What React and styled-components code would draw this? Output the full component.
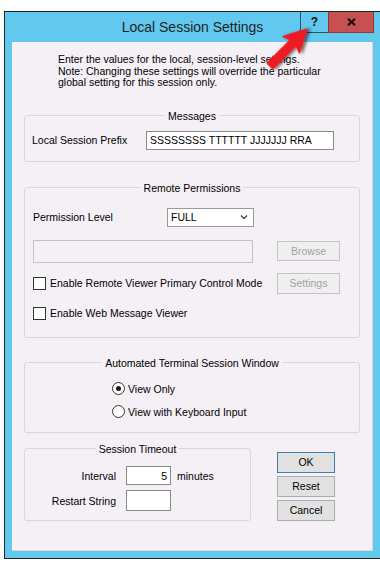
import React from 'react'
import styled, { createGlobalStyle } from 'styled-components'

const GlobalStyle = createGlobalStyle`
  html, body {
    margin: 0;
    padding: 0;
    background: #fff;
    overflow: hidden;
  }
  body {
    font-family: "Liberation Sans", Arial, sans-serif;
    color: #000;
  }
`

const Page = styled.div`
  position: relative;
  width: 380px;
  height: 568px;
  padding: 11px 0 0 4px;
  box-sizing: border-box;
  overflow: hidden;
`

const Window = styled.div`
  width: 378px;
  background: #62c8ee;
  border: 1px solid #232323;
  display: flex;
  flex-direction: column;
`

const TitleBar = styled.div`
  display: flex;
  align-items: flex-start;
  height: 30px;
`

const Title = styled.div`
  flex: 1;
  padding-left: 80px;
  text-align: center;
  font-size: 14px;
  line-height: 30px;
  color: #1f1f1f;
`

const CaptionButtons = styled.div`
  display: flex;
  margin: -1px 9px 0 0;
`

const CaptionButton = styled.div`
  width: ${(p) => p.$w}px;
  height: 22px;
  box-sizing: border-box;
  display: flex;
  align-items: center;
  justify-content: center;
  background: ${(p) => (p.$close ? '#c75050' : '#62c8ee')};
  border: 1px solid ${(p) => (p.$close ? '#8c3a3a' : '#2d4f5e')};
  border-top-color: #232323;
  border-right-width: ${(p) => (p.$close ? 1 : 0)}px;
  font-weight: bold;
  font-size: 12px;
  color: #111;
`

const Client = styled.div`
  margin: 0 10px 7px 7px;
  height: 509px;
  box-sizing: border-box;
  background: #f5f0f5;
  padding: 12px 12px 0 12px;
  border-right: 1px solid #d9d9dc;
  border-bottom: 1px solid #d9d9dc;
  font-size: 10.5px;
`

const Intro = styled.p`
  margin: 0 0 0 34px;
  line-height: 11.5px;
`

const Group = styled.fieldset`
  margin: ${(p) => p.$mt}px 0 0;
  padding: ${(p) => p.$pad};
  border: 1px solid #d6d9dd;
  border-radius: 3px;
  min-width: 0;
  width: ${(p) => (p.$w ? `${p.$w}px` : 'auto')};
  box-sizing: border-box;
`

const Legend = styled.legend`
  margin: 0 auto;
  padding: 0 3px;
  font-size: 10.5px;
  line-height: 12px;
`

const GroupBody = styled.div`
  display: flex;
  flex-direction: column;
  gap: ${(p) => p.$gap || 0}px;
  padding: ${(p) => p.$pad || 0};
`

const Row = styled.div`
  display: flex;
  align-items: center;
  justify-content: ${(p) => p.$justify || 'flex-start'};
  margin-top: ${(p) => p.$mt || 0}px;
  height: ${(p) => p.$h}px;
`

const Label = styled.span`
  width: ${(p) => p.$w}px;
  flex: none;
  text-align: ${(p) => p.$align || 'left'};
  margin-right: ${(p) => p.$gap || 0}px;
`

const Unit = styled.span`
  margin-left: 6px;
`

const TextBox = styled.div`
  width: ${(p) => p.$w}px;
  height: ${(p) => p.$h}px;
  box-sizing: border-box;
  border: 1px solid ${(p) => (p.$disabled ? '#c2c2c2' : '#8a8a8a')};
  background: ${(p) => (p.$disabled ? '#f5f0f5' : '#fff')};
  display: flex;
  align-items: center;
  justify-content: ${(p) => (p.$right ? 'flex-end' : 'flex-start')};
  padding: 0 3px;
  font-size: 10.5px;
  white-space: nowrap;
  overflow: hidden;
`

const Select = styled.div`
  width: 87px;
  height: 19px;
  box-sizing: border-box;
  border: 1px solid #9a9a9a;
  background: #fff;
  display: flex;
  align-items: center;
  justify-content: space-between;
  padding: 0 5px 0 3px;
`

const Button = styled.div`
  width: ${(p) => p.$w}px;
  height: ${(p) => p.$h || 21}px;
  box-sizing: border-box;
  display: flex;
  align-items: center;
  justify-content: center;
  background: ${(p) => (p.$disabled ? '#efefef' : '#e1e1e1')};
  border: 1px solid
    ${(p) => (p.$default ? '#3c7fb1' : p.$disabled ? '#c4c4c4' : '#adadad')};
  color: ${(p) => (p.$disabled ? '#a3a3a3' : '#000')};
  font-size: 10.5px;
`

const Check = styled.span`
  width: 13px;
  height: 13px;
  box-sizing: border-box;
  border: 1px solid #333;
  background: #fff;
  margin-right: 4px;
  flex: none;
`

const Radio = styled.span`
  width: 13px;
  height: 13px;
  box-sizing: border-box;
  border: 1px solid #333;
  border-radius: 50%;
  background: #fff;
  margin-right: 3px;
  flex: none;
  display: flex;
  align-items: center;
  justify-content: center;
  &::after {
    content: '';
    width: 5px;
    height: 5px;
    border-radius: 50%;
    background: ${(p) => (p.$on ? '#1a1a1a' : 'transparent')};
  }
`

const ButtonColumn = styled.div`
  display: flex;
  flex-direction: column;
  gap: 3px;
  margin: 9px 0 0 26px;
`

const BottomRow = styled.div`
  display: flex;
  align-items: flex-start;
  margin-top: 10px;
`

const Arrow = styled.svg`
  position: absolute;
  left: 256px;
  top: 18px;
  width: 64px;
  height: 64px;
  overflow: visible;
`

const Chevron = () => (
  <svg width="8" height="6" viewBox="0 0 8 6">
    <path d="M1 1.5 L4 4.5 L7 1.5" fill="none" stroke="#444" strokeWidth="1.3" />
  </svg>
)

export default function App() {
  return (
    <Page>
      <GlobalStyle />
      <Window>
        <TitleBar>
          <Title>Local Session Settings</Title>
          <CaptionButtons>
            <CaptionButton $w={28}>?</CaptionButton>
            <CaptionButton $w={46} $close>
              <svg width="9" height="8" viewBox="0 0 9 8">
                <path d="M1 0.8 L8 7.2 M8 0.8 L1 7.2" stroke="#111" strokeWidth="2.2" />
              </svg>
            </CaptionButton>
          </CaptionButtons>
        </TitleBar>

        <Client>
          <Intro>
            Enter the values for the local, session-level settings.
            <br />
            Note: Changing these settings will override the particular
            <br />
            global setting for this session only.
          </Intro>

          <Group $mt={21} $pad="9px 0 11px">
            <Legend>Messages</Legend>
            <GroupBody $pad="0 24px 0 7px">
              <Row $h={19}>
                <Label $w={114}>Local Session Prefix</Label>
                <TextBox $w={188} $h={19}>SSSSSSSS TTTTTT JJJJJJJ RRA</TextBox>
              </Row>
            </GroupBody>
          </Group>

          <Group $mt={20} $pad="14px 0 17px">
            <Legend>Remote Permissions</Legend>
            <GroupBody $pad="0 19px 0 8px">
              <Row $h={19}>
                <Label $w={134}>Permission Level</Label>
                <Select>
                  <span>FULL</span>
                  <Chevron />
                </Select>
              </Row>
              <Row $h={23} $mt={13} $justify="space-between">
                <TextBox $w={220} $h={23} $disabled />
                <Button $w={63} $h={20} $disabled>Browse</Button>
              </Row>
              <Row $h={21} $mt={10} $justify="space-between">
                <Row $h={13}>
                  <Check />
                  <span>Enable Remote Viewer Primary Control Mode</span>
                </Row>
                <Button $w={63} $disabled>Settings</Button>
              </Row>
              <Row $h={13} $mt={13}>
                <Check />
                <span>Enable Web Message Viewer</span>
              </Row>
            </GroupBody>
          </Group>

          <Group $mt={19} $pad="12px 0">
            <Legend>Automated Terminal Session Window</Legend>
            <GroupBody $gap={7} $pad="0 0 0 87px">
              <Row $h={16}>
                <Radio $on />
                <span>View Only</span>
              </Row>
              <Row $h={16}>
                <Radio />
                <span>View with Keyboard Input</span>
              </Row>
            </GroupBody>
          </Group>

          <BottomRow>
            <Group $mt={0} $w={227} $pad="11px 0 9px">
              <Legend>Session Timeout</Legend>
              <GroupBody $gap={5} $pad="0 0 0 7px">
                <Row $h={20}>
                  <Label $w={84} $align="right" $gap={10}>Interval</Label>
                  <TextBox $w={45} $h={19} $right>5</TextBox>
                  <Unit>minutes</Unit>
                </Row>
                <Row $h={20}>
                  <Label $w={84} $align="right" $gap={10}>Restart String</Label>
                  <TextBox $w={45} $h={21} />
                </Row>
              </GroupBody>
            </Group>
            <ButtonColumn>
              <Button $w={58} $default>OK</Button>
              <Button $w={58}>Reset</Button>
              <Button $w={58}>Cancel</Button>
            </ButtonColumn>
          </BottomRow>
        </Client>
      </Window>

      <Arrow viewBox="0 0 64 64">
        <defs>
          <filter id="arrowShadow" x="-30%" y="-30%" width="160%" height="160%">
            <feDropShadow dx="2" dy="2" stdDeviation="1.4" floodColor="#000" floodOpacity="0.55" />
          </filter>
        </defs>
        <g transform="translate(14 48) rotate(-45)" filter="url(#arrowShadow)">
          <polygon
            points="0,-4 33,-4 30,-11.5 52,0 30,11.5 33,4 0,4"
            fill="#ec1c24"
            stroke="#ec1c24"
            strokeWidth="1.5"
            strokeLinejoin="round"
          />
        </g>
      </Arrow>
    </Page>
  )
}
